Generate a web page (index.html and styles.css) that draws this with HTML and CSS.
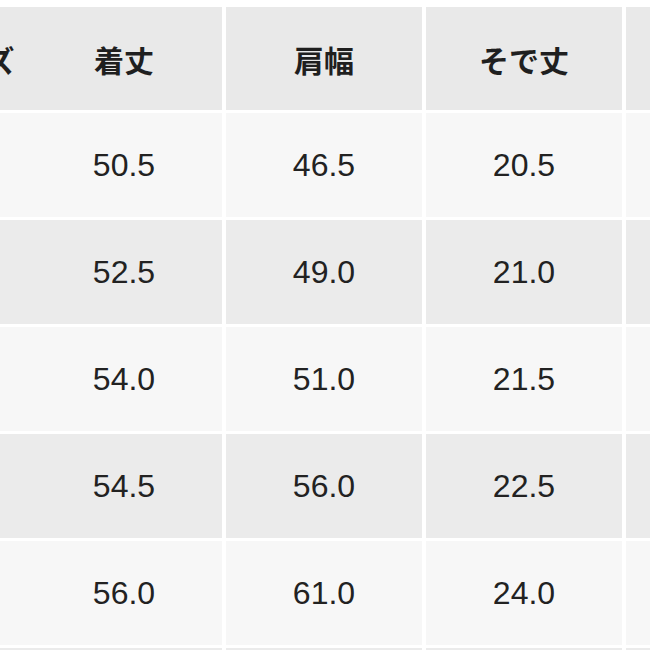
FILE: index.html
```html
<!DOCTYPE html>
<html lang="ja">
<head>
<meta charset="utf-8">
<link rel="stylesheet" href="styles.css">
</head>
<body>
<div class="size-table">
  <div class="cell head first">サイズ</div>
  <div class="cell head second">着丈</div>
  <div class="cell head">肩幅</div>
  <div class="cell head">そで丈</div>
  <div class="cell head">身幅</div>

  <div class="cell odd first">S</div>
  <div class="cell odd second">50.5</div>
  <div class="cell odd">46.5</div>
  <div class="cell odd">20.5</div>
  <div class="cell odd"></div>

  <div class="cell even first">M</div>
  <div class="cell even second">52.5</div>
  <div class="cell even">49.0</div>
  <div class="cell even">21.0</div>
  <div class="cell even"></div>

  <div class="cell odd first">L</div>
  <div class="cell odd second">54.0</div>
  <div class="cell odd">51.0</div>
  <div class="cell odd">21.5</div>
  <div class="cell odd"></div>

  <div class="cell even first">XL</div>
  <div class="cell even second">54.5</div>
  <div class="cell even">56.0</div>
  <div class="cell even">22.5</div>
  <div class="cell even"></div>

  <div class="cell odd first">XXL</div>
  <div class="cell odd second">56.0</div>
  <div class="cell odd">61.0</div>
  <div class="cell odd">24.0</div>
  <div class="cell odd"></div>

  <div class="cell even first"></div>
  <div class="cell even second"></div>
  <div class="cell even"></div>
  <div class="cell even"></div>
  <div class="cell even"></div>
</div>
</body>
</html>
```

FILE: styles.css
```css
html, body {
  margin: 0;
  padding: 0;
  background: #ffffff;
  overflow: hidden;
}

.size-table {
  display: grid;
  grid-template-columns: 186px 163px 200px 200px 200px;
  grid-template-rows: 103px repeat(6, 104px);
  row-gap: 3px;
  margin-top: 7px;
  margin-left: -123px;
  width: 949px;
  font-family: "Liberation Sans", Arial, "Noto Sans CJK JP", sans-serif;
  color: #222222;
}

.cell {
  display: flex;
  align-items: center;
  justify-content: center;
  margin-right: 4px;
  font-size: 32px;
  line-height: 1;
}

.cell.first {
  margin-right: 0;
}

.cell.second {
  padding-right: 37px;
}

.head {
  background: #e9e9e9;
  font-family: "Noto Sans CJK JP", sans-serif;
  font-weight: 700;
  font-size: 30px;
  color: #1f1f1f;
}

.odd {
  background: #f7f7f7;
}

.even {
  background: #ebebeb;
}
```
